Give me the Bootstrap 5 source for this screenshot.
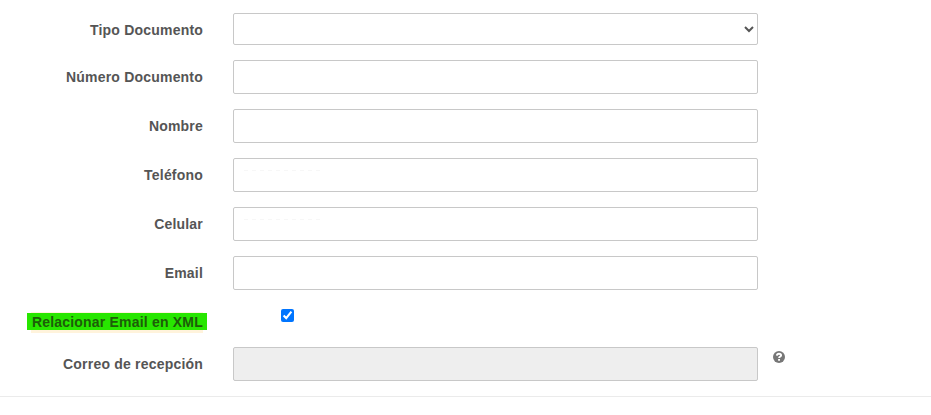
<!DOCTYPE html>
<html lang="es">
<head>
<meta charset="utf-8">
<title>Documento</title>
<link href="https://cdn.jsdelivr.net/npm/bootstrap@5.3.0/dist/css/bootstrap.min.css" rel="stylesheet">
<style>
body{font-family:"Liberation Sans",Arial,sans-serif;font-size:14px;line-height:20px;color:#555;background:#fff;overflow:hidden}
.doc-form{padding-top:13px;padding-bottom:15px;border-bottom:1px solid #ebebeb}
.field-row{margin-bottom:15px}
.field-row:last-child{margin-bottom:0}
.check-row{height:27px}
.field-label{width:203px;margin-right:30px;padding-top:7px;font-weight:700;letter-spacing:.2px;color:#555}
.doc-form .field-box{width:525px;height:34px;border:1px solid #c8c8c8;border-radius:2px;padding:6px 12px;font-size:14px;color:#555;background-color:#fff}
.doc-form .field-box:disabled{background-color:#eee}
.doc-form select.field-box{height:32px;padding:0}
.doc-form .faint{background:repeating-linear-gradient(90deg,#f7f7f7 0 4px,#fff 4px 8px) 10px 11px/76px 1px no-repeat #fff}
.marked{color:#1d5d08;background:#28e600;padding:0 4px 0 5px;margin-right:-4px;height:17px;line-height:18px;margin-top:1px;box-shadow:0 -5px 0 -4px #fff3dc,0 7px 0 -4px #fff3dc}
.check-box{width:13px;height:13px;margin:4px 0 0 48px}
.help-icon{width:12px;height:12px;margin:4px 0 0 15px}
</style>
</head>
<body>
<form class="doc-form">
  <div class="field-row d-flex"><label class="field-label text-end" for="tipo">Tipo Documento</label><select id="tipo" class="field-box"><option></option></select></div>
  <div class="field-row d-flex"><label class="field-label text-end" for="numero">Número Documento</label><input id="numero" class="field-box" type="text"></div>
  <div class="field-row d-flex"><label class="field-label text-end" for="nombre">Nombre</label><input id="nombre" class="field-box" type="text"></div>
  <div class="field-row d-flex"><label class="field-label text-end" for="tel">Teléfono</label><input id="tel" class="field-box faint" type="text"></div>
  <div class="field-row d-flex"><label class="field-label text-end" for="cel">Celular</label><input id="cel" class="field-box faint" type="text"></div>
  <div class="field-row d-flex"><label class="field-label text-end" for="email">Email</label><input id="email" class="field-box" type="text"></div>
  <div class="field-row check-row d-flex"><label class="field-label d-flex justify-content-end text-nowrap" for="xml"><span class="marked">Relacionar Email en XML</span></label><input id="xml" class="check-box" type="checkbox" checked></div>
  <div class="field-row d-flex"><label class="field-label text-end" for="correo">Correo de recepción</label><input id="correo" class="field-box" type="text" disabled>
    <svg class="help-icon" viewBox="0 0 12 12"><circle cx="6" cy="6" r="6" fill="#777"/><path d="M3.900 4.600C4 3.200 4.900 2.800 6 2.800c1.200 0 2.100.6 2.100 1.600C8.100 5.600 6.100 5.500 6.100 7.100" fill="none" stroke="#fff" stroke-width="1.900"/><path d="M5.100 8h1.900v1.700H5.100z" fill="#fff"/></svg>
  </div>
</form>
<script src="https://cdn.jsdelivr.net/npm/bootstrap@5.3.0/dist/js/bootstrap.bundle.min.js"></script>
</body>
</html>
